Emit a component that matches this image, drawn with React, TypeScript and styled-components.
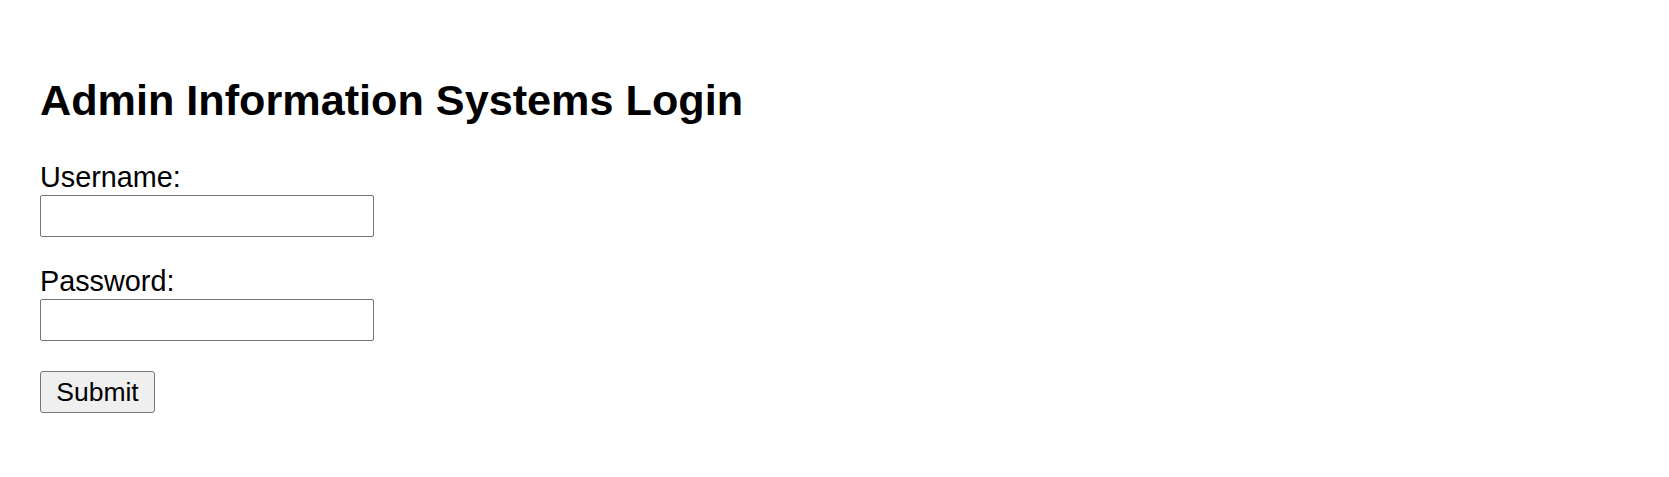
import React from "react";
import styled, { createGlobalStyle } from "styled-components";

const Global = createGlobalStyle`
  html, body { margin: 0; padding: 0; background: #ffffff; }
  body { font-family: "Liberation Sans", Arial, sans-serif; color: #000; }
`;

const Page = styled.main`
  padding: 76px 0 0 40px;
  display: flex;
  flex-direction: column;
  align-items: flex-start;
`;

const Title = styled.h1`
  margin: 0 0 36px;
  font-size: 43.2px;
  line-height: 48px;
  font-weight: 700;
`;

const Form = styled.form`
  display: flex;
  flex-direction: column;
  align-items: flex-start;
`;

const Field = styled.div<{ $gap: number }>`
  display: flex;
  flex-direction: column;
  align-items: flex-start;
  margin-bottom: ${(p) => p.$gap}px;
`;

const Label = styled.label`
  font-size: 28.8px;
  line-height: 35px;
`;

const Input = styled.input`
  box-sizing: border-box;
  width: 334px;
  height: 42px;
  margin: 0;
  border: 1px solid #767676;
  border-radius: 2px;
  background: #fff;
  font-size: 26px;
  font-family: "Liberation Sans", Arial, sans-serif;
`;

const Button = styled.button`
  box-sizing: border-box;
  width: 115px;
  height: 42px;
  margin: 0;
  padding: 0;
  border: 1px solid #767676;
  border-radius: 3px;
  background: #efefef;
  color: #000;
  font-family: "Liberation Sans", Arial, sans-serif;
  font-size: 26.5px;
`;

export default function App() {
  return (
    <>
      <Global />
      <Page>
        <Title>Admin Information Systems Login</Title>
        <Form onSubmit={(e) => e.preventDefault()}>
          <Field $gap={27}>
            <Label htmlFor="username">Username:</Label>
            <Input id="username" type="text" />
          </Field>
          <Field $gap={30}>
            <Label htmlFor="password">Password:</Label>
            <Input id="password" type="password" />
          </Field>
          <Button type="submit">Submit</Button>
        </Form>
      </Page>
    </>
  );
}
